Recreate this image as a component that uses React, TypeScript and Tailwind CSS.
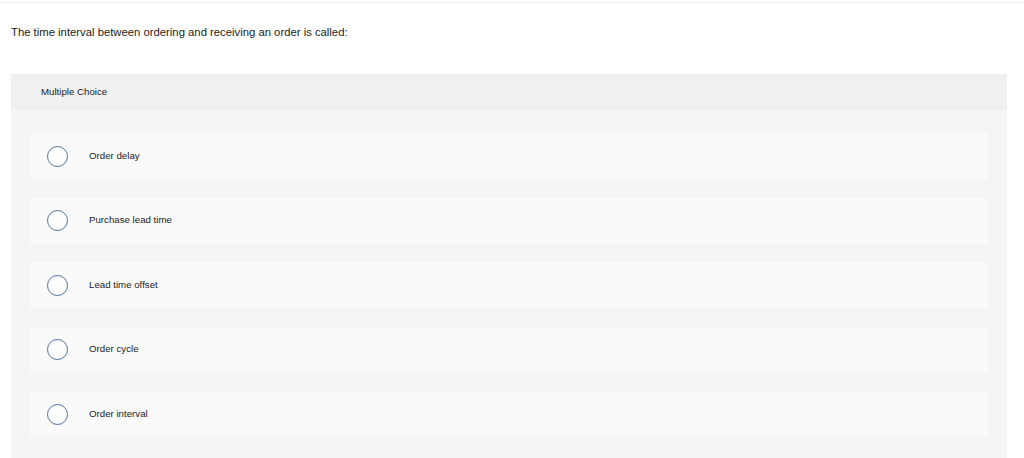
const options = [
  "Order delay",
  "Purchase lead time",
  "Lead time offset",
  "Order cycle",
  "Order interval",
];

function Radio() {
  return (
    <span className="block w-[21px] h-[21px] shrink-0 rounded-full border border-[#4d6f9e] bg-white" />
  );
}

export default function App() {
  return (
    <div
      className="w-[1024px] h-[458px] overflow-hidden bg-white text-[#222222]"
      style={{ fontFamily: "'Liberation Sans', Arial, sans-serif" }}
    >
      <div className="mt-[2px] border-t border-[#eeeeee]" />
      <p className="pl-[11px] pt-[21px] text-[11.3px] leading-[16px]">
        The time interval between ordering and receiving an order is called:
      </p>
      <section className="mt-[34px] ml-[11px] w-[996px] bg-[#f5f5f5] h-[400px]">
        <div className="h-[36px] bg-[#f0f0f0] flex items-center pl-[30px] text-[9.7px]">
          Multiple Choice
        </div>
        <div className="flex flex-col gap-[18.5px] pt-[23px] px-[19px]">
          {options.map((o) => (
            <label
              key={o}
              className="h-[46px] bg-[#fafafa] flex items-center pl-[17px] gap-[21px] text-[9.7px]"
            >
              <Radio />
              <span>{o}</span>
            </label>
          ))}
        </div>
      </section>
    </div>
  );
}
